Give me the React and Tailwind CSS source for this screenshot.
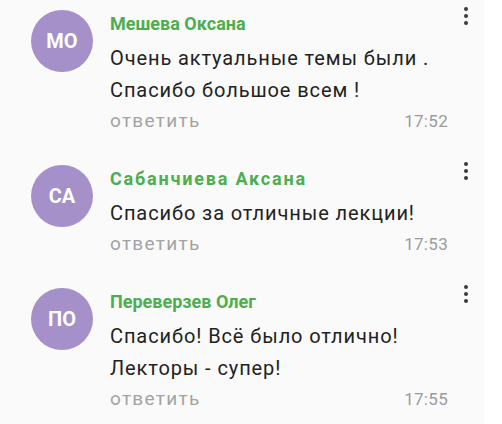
const comments = [
  {
    id: 1,
    initials: 'МО',
    name: 'Мешева Оксана',
    nameCls: 'tracking-[0px]',
    lines: ['Очень актуальные темы были .', 'Спасибо большое всем !'],
    time: '17:52',
  },
  {
    id: 2,
    initials: 'СА',
    name: 'Сабанчиева Аксана',
    nameCls: 'tracking-[1.8px]',
    lines: ['Спасибо за отличные лекции!'],
    time: '17:53',
  },
  {
    id: 3,
    initials: 'ПО',
    name: 'Переверзев Олег',
    nameCls: 'tracking-[0px]',
    lines: ['Спасибо! Всё было отлично!', 'Лекторы - супер!'],
    time: '17:55',
  },
]

const Dots = () => (
  <div className="flex flex-col items-center gap-[3px] w-[5px] -mt-[2px] shrink-0">
    <span className="w-[4px] h-[4px] rounded-full bg-[#3a3a3a]" />
    <span className="w-[4px] h-[4px] rounded-full bg-[#3a3a3a]" />
    <span className="w-[4px] h-[4px] rounded-full bg-[#3a3a3a]" />
  </div>
)

export default function App() {
  return (
    <div className="w-[502px] h-[424px] bg-white overflow-hidden font-['Roboto','Liberation_Sans',sans-serif]">
      <div className="w-[484px] h-full bg-[#fafafa] pt-[9px] flex flex-col gap-[28px]">
        {comments.map(c => (
          <div key={c.id} className="flex items-start pl-[31px]">
            {/* аватар */}
            <div className="w-[62px] h-[62px] mt-[1px] shrink-0 rounded-full bg-[#a590c9] flex items-center justify-center text-white text-[20px] font-bold">
              {c.initials}
            </div>

            <div className="ml-[17px] w-[338px]">
              <div className={`text-[18px] leading-[30px] font-bold text-[#4cae4f] ${c.nameCls}`}>{c.name}</div>
              <div className="mt-[3px]">
                {c.lines.map(l => (
                  <div key={l} className="text-[20px] leading-[32px] text-[#222] tracking-[0.9px]">{l}</div>
                ))}
              </div>
              <div className="flex items-baseline justify-between leading-[30px]">
                <span className="text-[19px] text-[#a3a3a3] tracking-[1.3px]">ответить</span>
                <span className="text-[17px] text-[#9b9b9b] tracking-[0.3px]">{c.time}</span>
              </div>
            </div>

            <div className="ml-[15px]">
              <Dots />
            </div>
          </div>
        ))}
      </div>
    </div>
  )
}
